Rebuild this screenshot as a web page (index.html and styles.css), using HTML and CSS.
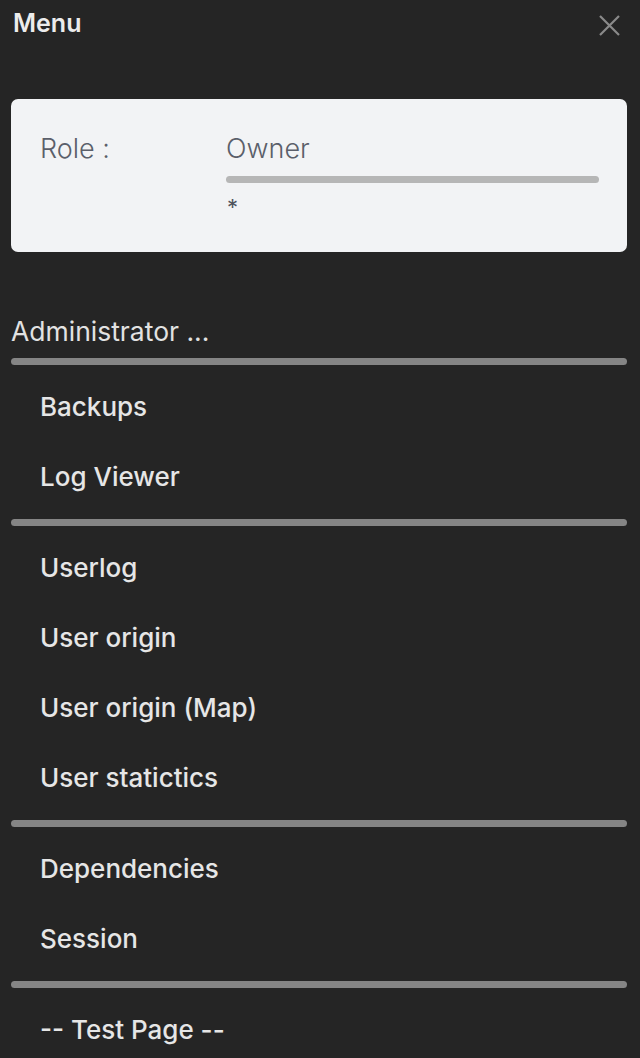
FILE: index.html
```html
<!DOCTYPE html>
<html lang="en">
<head>
<meta charset="utf-8">
<title>Menu</title>
<link rel="stylesheet" href="styles.css">
</head>
<body>
<div class="drawer">
  <header class="top">
    <span class="title">Menu</span>
    <button class="close" aria-label="Close">
      <svg width="21" height="21" viewBox="0 0 21 21"><path d="M1 1 L20 20 M20 1 L1 20" stroke="#8a8a8a" stroke-width="2.2" fill="none" stroke-linecap="butt"/></svg>
    </button>
  </header>

  <section class="card">
    <div class="label">Role :</div>
    <div class="value">
      <div class="owner">Owner</div>
      <div class="bar"></div>
      <div class="star">*</div>
    </div>
  </section>

  <div class="group-title">Administrator ...</div>
  <div class="divider"></div>
  <a class="item">Backups</a>
  <a class="item">Log Viewer</a>
  <div class="divider"></div>
  <a class="item">Userlog</a>
  <a class="item">User origin</a>
  <a class="item">User origin (Map)</a>
  <a class="item">User statictics</a>
  <div class="divider"></div>
  <a class="item">Dependencies</a>
  <a class="item">Session</a>
  <div class="divider"></div>
  <a class="item">-- Test Page --</a>
</div>
</body>
</html>
```

FILE: styles.css
```css
html, body {
  margin: 0;
  padding: 0;
  background: #252525;
  height: 100%;
  overflow: hidden;
}
.drawer {
  padding: 0 13px 0 11px;
  font-family: Inter, "Noto Sans", sans-serif;
  color: #e6e6e6;
}
.top {
  display: flex;
  justify-content: space-between;
  align-items: flex-start;
  height: 91px;
  padding-top: 8px;
}
.title {
  font-size: 25px;
  line-height: 30px;
  font-weight: 600;
  color: #ececec;
  padding-left: 2px;
}
.close {
  background: none;
  border: 0;
  padding: 0;
  margin: 7px 7px 0 0;
  width: 21px;
  height: 21px;
  display: block;
}
.close svg { display: block; }
.card {
  background: #f2f3f5;
  border-radius: 7px;
  height: 153px;
  box-sizing: border-box;
  padding: 30px 28px 0 29px;
  display: grid;
  grid-template-columns: 186px 1fr;
  color: #5b5f6a;
}
.label, .owner {
  font-size: 27px;
  line-height: 40px;
  font-weight: 300;
}
.bar {
  height: 7px;
  border-radius: 4px;
  background: #b6b6b6;
  margin-top: 7px;
}
.star {
  font-size: 22px;
  line-height: 24px;
  margin-top: 12px;
  padding-left: 1px;
  color: #4f535d;
}
.group-title {
  margin-top: 59px;
  font-size: 26.5px;
  line-height: 40px;
  color: #e2e2e2;
}
.divider {
  height: 7px;
  border-radius: 4px;
  background: #858585;
  margin: 7px 0;
}
.item {
  display: block;
  padding-left: 29px;
  font-size: 26px;
  line-height: 70px;
  font-weight: 500;
  color: #e6e6e6;
}
```
